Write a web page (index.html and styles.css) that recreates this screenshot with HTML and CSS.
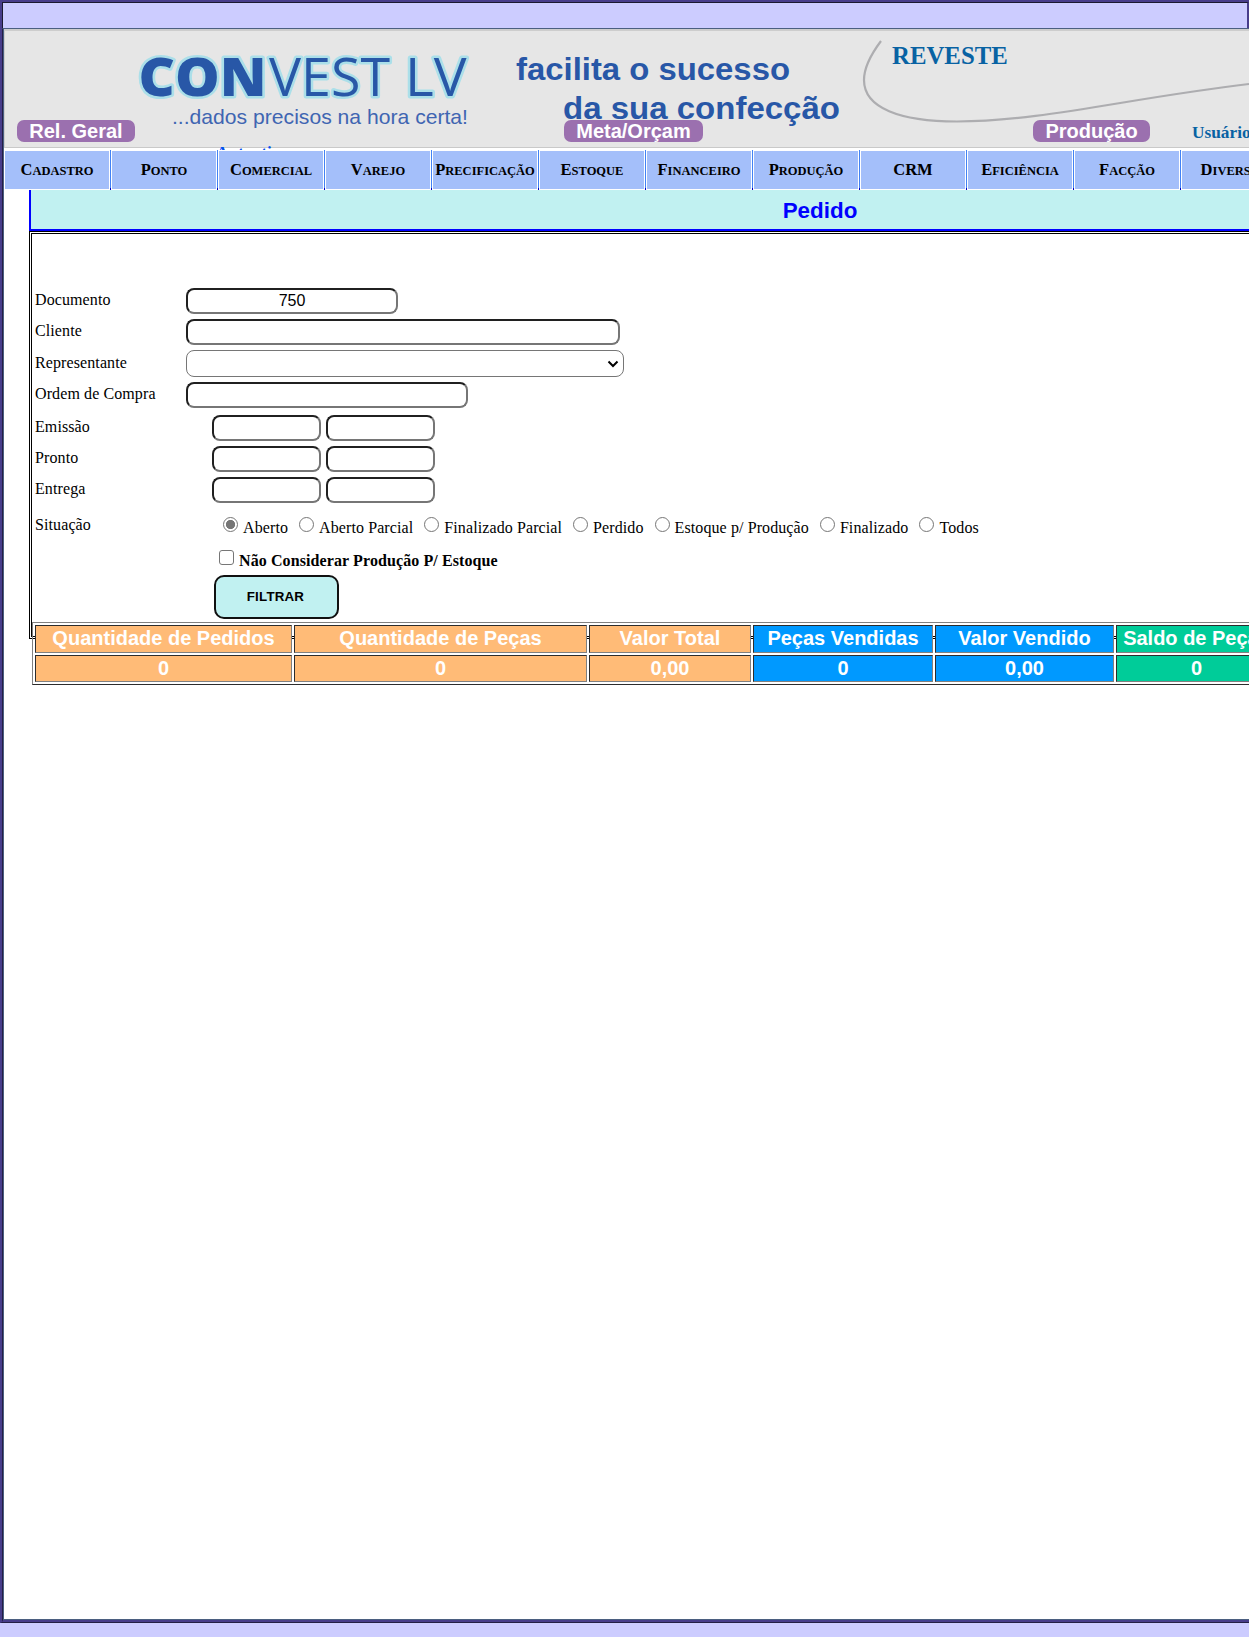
FILE: index.html
```html
<!DOCTYPE html>
<html lang="pt-BR">
<head>
<meta charset="utf-8">
<title>Pedido</title>
<link rel="stylesheet" href="styles.css">
</head>
<body>
<div class="frame">
  <div class="topbar"></div>
  <div class="page">
    <header class="banner">
      <svg class="brand" width="1245" height="121" viewBox="4 29 1245 121">
        <g class="logo">
          <text class="logo-bold" x="138.500" y="95.5" textLength="128" lengthAdjust="spacingAndGlyphs">CON</text>
          <text x="269" y="95.5" textLength="121" lengthAdjust="spacingAndGlyphs">VEST</text>
          <text x="405" y="95.5" textLength="61.500" lengthAdjust="spacingAndGlyphs">LV</text>
        </g>
        <text class="tagline" x="172" y="123.500" textLength="296" lengthAdjust="spacingAndGlyphs">...dados precisos na hora certa!</text>
        <text class="slogan" x="516" y="80" textLength="274" lengthAdjust="spacingAndGlyphs">facilita o sucesso</text>
        <text class="slogan" x="563" y="118.5" textLength="277" lengthAdjust="spacingAndGlyphs">da sua confecção</text>
        <path class="swoosh" d="M881 41C872 53 864 67 864 80C864 108 900 121.500 957 121.500C1040 121.500 1130 98 1249 84"/>
      </svg>
      <span class="company">REVESTE</span>
      <a class="pill pill-geral">Rel. Geral</a>
      <a class="pill pill-meta">Meta/Orçam</a>
      <a class="pill pill-producao">Produção</a>
      <span class="user">Usuário</span>
      <span class="auth">Autentic</span>
    </header>
    <nav class="menu">
      <a>Cadastro</a><a>Ponto</a><a>Comercial</a><a>Varejo</a><a>Precificação</a><a>Estoque</a><a>Financeiro</a><a>Produção</a><a class="caps">CRM</a><a>Eficiência</a><a>Facção</a><a>Diversos</a>
    </nav>
    <main class="content">
      <h1 class="title">Pedido</h1>
      <form class="panel">
        <div class="row"><label>Documento</label><input class="doc" type="text" value="750"></div>
        <div class="row"><label>Cliente</label><input class="client" type="text"></div>
        <div class="row row-select"><label>Representante</label>
          <div class="select"><svg width="12" height="8" viewBox="0 0 12 8"><path d="M1.500 1.500L6 6L10.500 1.500"/></svg></div>
        </div>
        <div class="row row-order"><label>Ordem de Compra</label><input class="order" type="text"></div>
        <div class="row dates"><label>Emissão</label><input type="text"><input type="text"></div>
        <div class="row dates"><label>Pronto</label><input type="text"><input type="text"></div>
        <div class="row dates"><label>Entrega</label><input type="text"><input type="text"></div>
        <div class="status">
          <span class="status-label">Situação</span>
          <div class="radios">
            <label><input type="radio" name="s" checked>Aberto</label>
            <label><input type="radio" name="s">Aberto Parcial</label>
            <label><input type="radio" name="s">Finalizado Parcial</label>
            <label><input type="radio" name="s">Perdido</label>
            <label><input type="radio" name="s">Estoque p/ Produção</label>
            <label><input type="radio" name="s">Finalizado</label>
            <label><input type="radio" name="s">Todos</label>
          </div>
        </div>
        <label class="ignore"><input type="checkbox">Não Considerar Produção P/ Estoque</label>
        <button class="filter" type="button">FILTRAR</button>
        <table class="totals">
          <colgroup><col class="c1"><col class="c2"><col class="c3"><col class="c4"><col class="c5"><col class="c6"><col></colgroup>
          <tr><td class="o">Quantidade de Pedidos</td><td class="o">Quantidade de Peças</td><td class="o">Valor Total</td><td class="b">Peças Vendidas</td><td class="b">Valor Vendido</td><td class="g">Saldo de Peças</td><td class="g"></td></tr>
          <tr class="values"><td class="o">0</td><td class="o">0</td><td class="o">0,00</td><td class="b">0</td><td class="b">0,00</td><td class="g">0</td><td class="g"></td></tr>
        </table>
      </form>
    </main>
  </div>
</div>
</body>
</html>
```

FILE: styles.css
```css
* { box-sizing: border-box; }
html { overflow: hidden; background: #ccccff; }
body {
  margin: 0;
  height: 1637px;
  overflow: hidden;
  font: 16px "Liberation Serif", serif;
  color: #000;
}
.frame {
  height: 1623px;
  border-top: 2px solid #483d8b;
  border-left: 2px solid #483d8b;
  border-bottom: 1px solid #241f46;
}
.topbar {
  height: 26px;
  border-top: 1px solid #1b1930;
  border-left: 1px solid #1b1930;
  border-right: 2px solid #483d8b;
}
.page {
  height: 1594px;
  overflow: hidden;
  background: #fff;
  border-top: 1px solid #4b5f80;
  border-left: 1px solid #241f46;
  border-bottom: 2px solid #483d8b;
  box-shadow: inset 1px 0 #4b5f80, inset 0 -1px #4b5f80;
  padding-left: 1px;
}
.banner {
  position: relative;
  height: 121px;
  overflow: hidden;
  background: linear-gradient(#e6e6e6, #e6e6e6) 0 0 / 100% 119px no-repeat;
}
.banner::before {
  content: "";
  position: absolute;
  inset: 0 -2px 2px 0;
  border-style: solid;
  border-color: #cdcdcd #cdcdcd #c9c9c9 #cdcdcd;
  border-width: 2px 1px 1px;
}
.brand { position: absolute; left: 0; top: 0; }
.logo text {
  font: 53px "Open Sans", sans-serif;
  fill: #2857a7;
  stroke: #abdfe9;
  stroke-width: 5px;
  stroke-linejoin: round;
  paint-order: stroke;
}
.logo .logo-bold { font-weight: 800; }
.tagline { font: 21px "Liberation Sans", sans-serif; fill: #3f65b2; }
.slogan { font: bold 32px "Liberation Sans", sans-serif; fill: #2857a7; }
.swoosh { fill: none; stroke: #adadb0; stroke-width: 2.2; }
.company, .pill, .user, .auth { position: absolute; white-space: nowrap; font-weight: bold; }
.company { left: 888px; top: 13px; font-size: 24.8px; line-height: 28px; color: #0862a3; }
.user { left: 1188px; top: 94px; font-size: 17.3px; line-height: 20px; color: #0862a3; }
.auth { left: 212px; top: 114px; font-size: 17.3px; line-height: 20px; color: #0050f0; }
.pill {
  top: 91px;
  height: 22px;
  border-radius: 7px;
  background: #9b70af;
  color: #fff;
  font: bold 20px/22px "Liberation Sans", sans-serif;
  text-align: center;
}
.pill-geral { left: 13px; width: 118px; }
.pill-meta { left: 560px; width: 139px; }
.pill-producao { left: 1029px; width: 117px; }
.menu { display: flex; width: 1284px; height: 40px; }
.menu a {
  flex: 0 0 107px;
  position: relative;
  border: 1px solid #fff;
  border-right-width: 2px;
  background: #a4bffa;
  text-align: center;
  text-transform: uppercase;
  font-size: 12.5px;
  font-weight: bold;
  line-height: 38px;
  white-space: nowrap;
}
.menu a::after {
  content: "";
  position: absolute;
  right: -2px;
  top: -1px;
  width: 1px;
  height: 40px;
  background: linear-gradient(#4282f4 38px, #0000c0 38px);
}
.menu a::first-letter, .menu .caps { font-size: 16.5px; }
.content { width: 1582px; margin-left: 25px; }
.title {
  height: 41px;
  margin: 0;
  border: solid #0000ff;
  border-width: 0 2px 2px;
  background: #c1f1f1;
  color: #0000ff;
  font: bold 22.4px/42px "Liberation Sans", sans-serif;
  text-align: center;
}
.panel {
  height: 408px;
  border: 3px double #000;
  padding-top: 54px;
}
.row { display: flex; height: 31px; padding-left: 3px; }
.row label, .status, .ignore { letter-spacing: 0.1px; }
.row label { width: 151px; line-height: 22px; padding-top: 1px; }
.row-select { height: 32px; }
.row-select label { padding-top: 2px; }
.row-order { height: 33px; }
.dates { gap: 5px; }
.dates label { width: 172px; }
input[type=text] {
  width: 109px;
  height: 26px;
  margin: 0;
  padding: 1px 2px;
  border: 2px solid;
  border-color: #202020 #767676 #767676 #202020;
  border-radius: 8px;
  background: #fff;
  font: 16px "Liberation Sans", sans-serif;
}
input.doc { width: 212px; text-align: center; }
input.client { width: 434px; }
input.order { width: 282px; }
.select {
  display: flex;
  align-items: center;
  justify-content: flex-end;
  width: 438px;
  height: 27px;
  padding-right: 4px;
  border: 1px solid #767676;
  border-radius: 8px;
}
.select path { fill: none; stroke: #000; stroke-width: 2; }
.status { display: flex; height: 41px; padding-left: 3px; }
.status-label { width: 188px; padding-top: 8px; }
.radios { display: flex; gap: 11px; white-space: nowrap; }
.radios label { display: flex; padding-top: 11px; }
.radios input, .ignore input {
  appearance: none;
  flex: none;
  width: 15px;
  height: 15px;
  border: 1px solid #767676;
  background: #fff;
}
.radios input { margin: -2px 5px 0 0; border-radius: 50%; }
.radios input:checked { background: radial-gradient(circle, #767676 4.3px, #fff 4.9px); }
.ignore {
  display: flex;
  height: 26px;
  padding-left: 187px;
  padding-top: 3px;
  font-weight: bold;
}
.ignore input { margin: -2px 5px 0 0; border-radius: 3px; }
.filter {
  display: block;
  width: 125px;
  height: 44px;
  margin: 0 0 3px 182px;
  padding: 0 2px 2px 0;
  border: 2px solid #111;
  border-radius: 10px;
  background: #c1f1f1;
  color: #000;
  font: bold 13.33px "Liberation Sans", sans-serif;
  letter-spacing: 0.2px;
}
.totals {
  table-layout: fixed;
  width: 1576px;
  border: 1px solid;
  border-color: #808080 #2c2c2c #2c2c2c #808080;
  border-spacing: 2px;
}
.totals td {
  height: 28px;
  padding: 0 0 2px;
  border: 1px solid;
  border-color: #2c2c2c #808080 #808080 #2c2c2c;
  color: #fff;
  font: bold 20px/22px "Liberation Sans", sans-serif;
  text-align: center;
  white-space: nowrap;
}
.totals .values td { height: 27px; }
.totals .o { background: #ffbb77; }
.totals .b { background: #0099ff; }
.totals .g { background: #00cc99; }
.c1 { width: 257px; }
.c2 { width: 293px; }
.c3 { width: 162px; }
.c4 { width: 180px; }
.c5 { width: 179px; }
.c6 { width: 161px; }
```
